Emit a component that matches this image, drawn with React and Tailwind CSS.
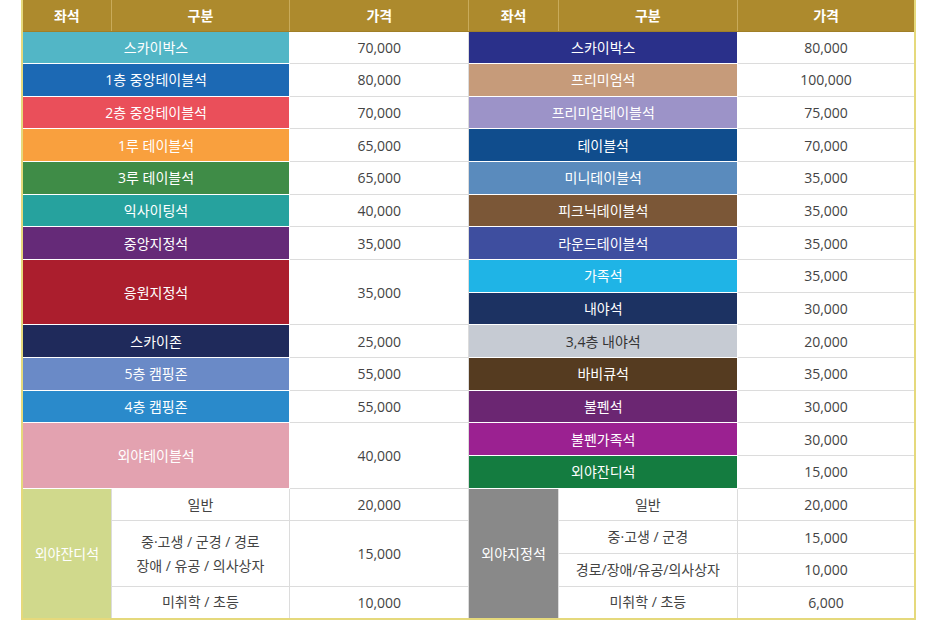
import React from "react";

const font = { fontFamily: '"Open Sans", "Noto Sans CJK KR", sans-serif' };

function Head({ children, last }) {
  return (
    <th
      className={
        "h-[31px] bg-[#ad8a2d] text-white text-[14px] font-bold border-[#c9ab5a] border-l border-b border-b-[#a07f27] " +
        (last ? "" : "border-r")
      }
    >
      {children}
    </th>
  );
}

function Seat({ bg, children, rowSpan, dark }) {
  return (
    <td
      colSpan={2}
      rowSpan={rowSpan}
      className={
        bg +
        " border border-white text-center text-[14px] " +
        (dark ? "text-[#333]" : "text-white")
      }
    >
      {children}
    </td>
  );
}

function Price({ children, rowSpan }) {
  return (
    <td
      rowSpan={rowSpan}
      className="bg-white border border-[#dcdcdc] text-center text-[14px] text-[#444]"
    >
      {children}
    </td>
  );
}

function Sub({ children, rowSpan }) {
  return (
    <td
      rowSpan={rowSpan}
      className="bg-white border border-[#dcdcdc] text-center text-[14px] text-[#444] leading-[24px]"
    >
      {children}
    </td>
  );
}

export default function App() {
  const row = "h-[32.67px]";
  return (
    <div className="bg-white min-h-[640px] pl-[21px]" style={font}>
      <table className="table-fixed border-collapse w-[895px] border-l-2 border-r-2 border-b-2 border-[#e5d97c]">
        <colgroup>
          <col className="w-[89px]" />
          <col className="w-[178px]" />
          <col className="w-[179px]" />
          <col className="w-[89px]" />
          <col className="w-[179px]" />
          <col className="w-[177px]" />
        </colgroup>
        <thead>
          <tr>
            <Head>좌석</Head>
            <Head>구분</Head>
            <Head>가격</Head>
            <Head>좌석</Head>
            <Head>구분</Head>
            <Head last>가격</Head>
          </tr>
        </thead>
        <tbody>
          <tr className={row}>
            <Seat bg="bg-[#52b6c6]">스카이박스</Seat>
            <Price>70,000</Price>
            <Seat bg="bg-[#2a308a]">스카이박스</Seat>
            <Price>80,000</Price>
          </tr>
          <tr className={row}>
            <Seat bg="bg-[#1c69b4]">1층 중앙테이블석</Seat>
            <Price>80,000</Price>
            <Seat bg="bg-[#c69b7a]">프리미엄석</Seat>
            <Price>100,000</Price>
          </tr>
          <tr className={row}>
            <Seat bg="bg-[#ea4f5a]">2층 중앙테이블석</Seat>
            <Price>70,000</Price>
            <Seat bg="bg-[#9c93c8]">프리미엄테이블석</Seat>
            <Price>75,000</Price>
          </tr>
          <tr className={row}>
            <Seat bg="bg-[#f9a03e]">1루 테이블석</Seat>
            <Price>65,000</Price>
            <Seat bg="bg-[#104d8d]">테이블석</Seat>
            <Price>70,000</Price>
          </tr>
          <tr className={row}>
            <Seat bg="bg-[#3f8c47]">3루 테이블석</Seat>
            <Price>65,000</Price>
            <Seat bg="bg-[#5a8bbd]">미니테이블석</Seat>
            <Price>35,000</Price>
          </tr>
          <tr className={row}>
            <Seat bg="bg-[#26a29e]">익사이팅석</Seat>
            <Price>40,000</Price>
            <Seat bg="bg-[#7b5737]">피크닉테이블석</Seat>
            <Price>35,000</Price>
          </tr>
          <tr className={row}>
            <Seat bg="bg-[#652a78]">중앙지정석</Seat>
            <Price>35,000</Price>
            <Seat bg="bg-[#3e4e9f]">라운드테이블석</Seat>
            <Price>35,000</Price>
          </tr>
          <tr className={row}>
            <Seat bg="bg-[#ab1e2d]" rowSpan={2}>
              응원지정석
            </Seat>
            <Price rowSpan={2}>35,000</Price>
            <Seat bg="bg-[#1fb4e6]">가족석</Seat>
            <Price>35,000</Price>
          </tr>
          <tr className={row}>
            <Seat bg="bg-[#1c3262]">내야석</Seat>
            <Price>30,000</Price>
          </tr>
          <tr className={row}>
            <Seat bg="bg-[#1f2a5b]">스카이존</Seat>
            <Price>25,000</Price>
            <Seat bg="bg-[#c6cbd3]" dark>
              3,4층 내야석
            </Seat>
            <Price>20,000</Price>
          </tr>
          <tr className={row}>
            <Seat bg="bg-[#6a8ac7]">5층 캠핑존</Seat>
            <Price>55,000</Price>
            <Seat bg="bg-[#553b20]">바비큐석</Seat>
            <Price>35,000</Price>
          </tr>
          <tr className={row}>
            <Seat bg="bg-[#2a8acb]">4층 캠핑존</Seat>
            <Price>55,000</Price>
            <Seat bg="bg-[#6b2672]">불펜석</Seat>
            <Price>30,000</Price>
          </tr>
          <tr className={row}>
            <Seat bg="bg-[#e3a2b0]" rowSpan={2}>
              외야테이블석
            </Seat>
            <Price rowSpan={2}>40,000</Price>
            <Seat bg="bg-[#9b2191]">불펜가족석</Seat>
            <Price>30,000</Price>
          </tr>
          <tr className={row}>
            <Seat bg="bg-[#147c40]">외야잔디석</Seat>
            <Price>15,000</Price>
          </tr>
          <tr className={row}>
            <td
              rowSpan={4}
              className="bg-[#d0d98c] border border-[#dcdcdc] border-l-[#d0d98c] text-center text-[14px] text-white"
            >
              외야잔디석
            </td>
            <Sub>일반</Sub>
            <Price>20,000</Price>
            <td
              rowSpan={4}
              className="bg-[#898989] border border-[#dcdcdc] text-center text-[14px] text-white"
            >
              외야지정석
            </td>
            <Sub>일반</Sub>
            <Price>20,000</Price>
          </tr>
          <tr className={row}>
            <Sub rowSpan={2}>
              중·고생 / 군경 / 경로
              <br />
              장애 / 유공 / 의사상자
            </Sub>
            <Price rowSpan={2}>15,000</Price>
            <Sub>중·고생 / 군경</Sub>
            <Price>15,000</Price>
          </tr>
          <tr className={row}>
            <Sub>경로/장애/유공/의사상자</Sub>
            <Price>10,000</Price>
          </tr>
          <tr className={row}>
            <Sub>미취학 / 초등</Sub>
            <Price>10,000</Price>
            <Sub>미취학 / 초등</Sub>
            <Price>6,000</Price>
          </tr>
        </tbody>
      </table>
    </div>
  );
}
